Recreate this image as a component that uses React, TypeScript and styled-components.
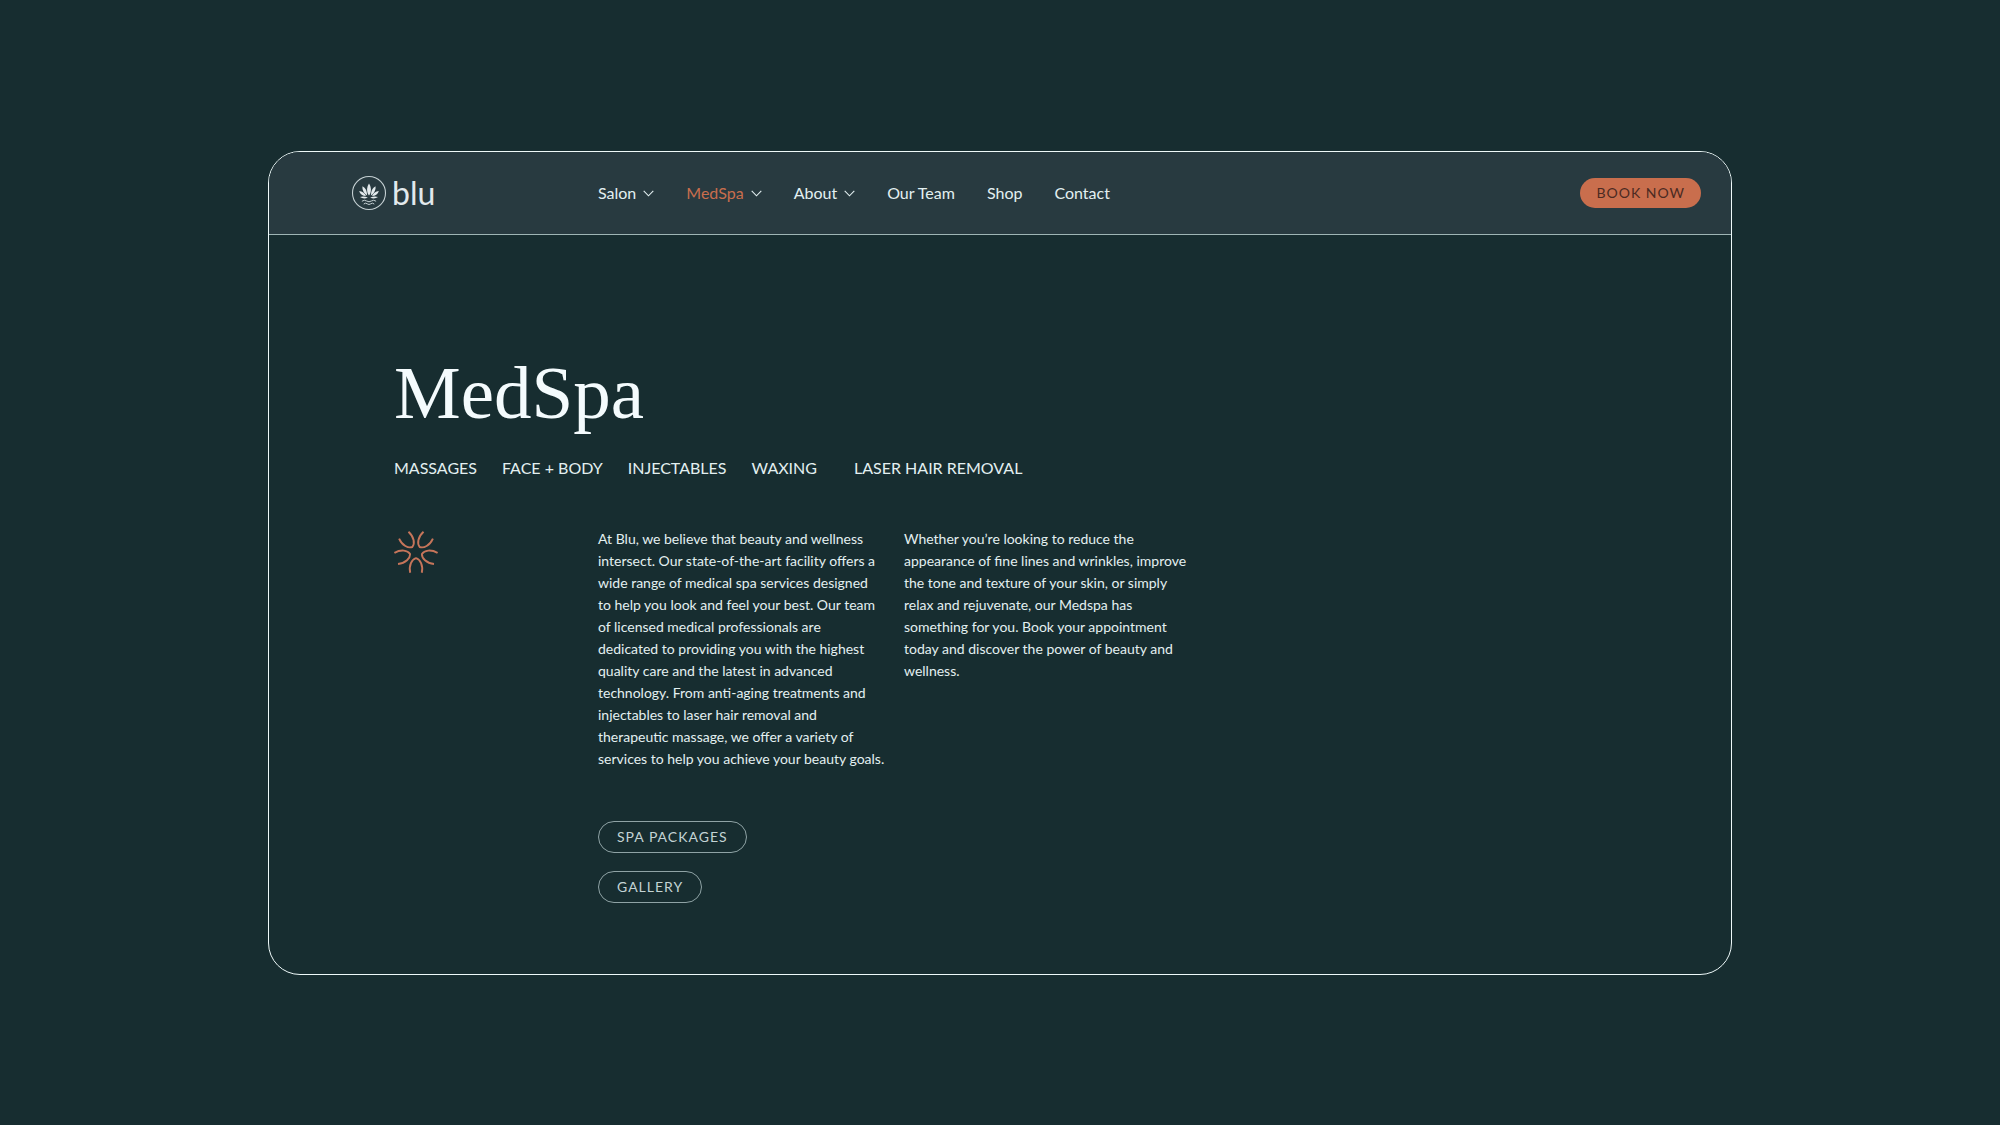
import React from 'react';
import styled, { createGlobalStyle } from 'styled-components';

const color = {
  page: '#172d30',
  header: '#283a40',
  text: '#e3f0f1',
  muted: '#c3d3d4',
  line: '#eef9f9',
  accent: '#c96e4d',
  accentInk: '#4b2a22',
};

const GlobalStyle = createGlobalStyle`
  *, *::before, *::after { box-sizing: border-box; }
  body {
    margin: 0;
    background: ${color.page};
    color: ${color.text};
    font-family: Lato, "Noto Sans", sans-serif;
    font-size: 14px;
    line-height: 22px;
  }
  a { color: inherit; text-decoration: none; }
`;

const Page = styled.div`
  display: flex;
  flex-direction: column;
  justify-content: center;
  min-height: 100vh;
  padding: 41px 268px 40px;

  @media (max-width: 1500px) {
    padding: 40px;
  }
`;

const Window = styled.div`
  border: 1px solid ${color.line};
  border-radius: 32px;
  overflow: hidden;
`;

const Header = styled.header`
  display: grid;
  grid-template-columns: 247px 1fr auto;
  align-items: center;
  padding: 25px 30px 25px 82px;
  background: ${color.header};
  border-bottom: 1px solid #9fb5b5;
`;

const Logo = styled.a`
  display: flex;
  align-items: center;
  gap: 5px;
  height: 32px;
  font-size: 32px;
  line-height: 32px;
  color: #e2e9ec;
`;

const Nav = styled.nav`
  display: flex;
  align-items: center;
  gap: 32px;
`;

const NavLink = styled.a<{ $active?: boolean }>`
  display: flex;
  align-items: center;
  gap: 7px;
  font-size: 16px;
  line-height: 24px;
  white-space: nowrap;
  color: ${(p) => (p.$active ? color.accent : color.text)};

  svg { color: ${color.text}; }
`;

const Button = styled.button<{ $filled?: boolean }>`
  height: ${(p) => (p.$filled ? 30 : 32)}px;
  padding: 0 ${(p) => (p.$filled ? 16 : 18)}px;
  border: ${(p) => (p.$filled ? '0' : '1px solid #8fa3a5')};
  border-radius: 16px;
  background: ${(p) => (p.$filled ? color.accent : 'transparent')};
  color: ${(p) => (p.$filled ? color.accentInk : color.muted)};
  font-family: inherit;
  font-size: 14px;
  line-height: 22px;
  letter-spacing: 1px;
  white-space: nowrap;
  cursor: pointer;
`;

const Content = styled.main`
  padding: 114px 125px 71px;
`;

const Title = styled.h1`
  margin: 0;
  font-family: "Liberation Serif", serif;
  font-size: 75px;
  font-weight: 400;
  line-height: 88px;
  color: #f4fbfd;
`;

const Tabs = styled.nav`
  display: flex;
  flex-wrap: wrap;
  gap: 25px;
  margin-top: 19px;
  font-size: 16px;
  line-height: 24px;

  a:last-child { margin-left: 12px; }
`;

const Intro = styled.section`
  display: grid;
  grid-template-columns: 204px 306px 306px;
  margin-top: 48px;

  > svg { margin-top: 3px; }
`;

const Copy = styled.p`
  margin: 0;
  white-space: nowrap;
`;

const Actions = styled.div`
  display: flex;
  flex-direction: column;
  align-items: flex-start;
  gap: 18px;
  margin-top: 51px;
  padding-left: 204px;
`;

const Lotus = () => (
  <svg width="36" height="36" viewBox="-18 -18 36 36" fill="none" aria-hidden="true">
    <circle r="16.5" stroke="#c5d0d3" strokeWidth="1.1" />
    <g fill="#e2e9ec">
      <path d="M0 2.6C-2.6-.8-2.5-5.8 0-9.6C2.5-5.8 2.6-.8 0 2.6Z" />
      {[1, -1].map((s) => (
        <g key={s} transform={`scale(${s} 1)`}>
          <path d="M1.9 2.4C1.9-2 3.4-5.2 6.5-6.8C7-3 5 .6 1.9 2.4Z" />
          <path d="M3 3.1C4.4 .2 6.6-1.7 9.9-2C8.7 1.2 6.3 3 3 3.1Z" />
          <path d="M1.2 4.5C4 3.5 6.4 3.2 9 4.1C6.6 5.8 3.6 5.9 1.2 4.5Z" />
        </g>
      ))}
    </g>
    <g stroke="#c5d0d3" strokeWidth="1" strokeLinecap="round">
      <path d="M-6.8 8Q-4.6 6.4-2.3 8T2.3 8T6.8 8" />
      <path d="M-5 10.8Q-3.6 9.4-1.8 10.8T1.8 10.8T5 10.8" />
    </g>
  </svg>
);

const Chevron = () => (
  <svg width="11" height="7" viewBox="0 0 11 7" fill="none" aria-hidden="true">
    <path d="M.7.9L5.5 5.8L10.3.9" stroke="currentColor" strokeWidth="1.1" />
  </svg>
);

const Burst = () => (
  <svg width="44" height="44" viewBox="-22 -21 44 44" fill="none" aria-hidden="true">
    {[0, 72, 144, 216, 288].map((angle) => (
      <path
        key={angle}
        transform={`rotate(${angle})`}
        d="M-5.8 20.8C-7.4 13.2-4.2 7.4 0 6.2C4.2 7.4 7.4 13.2 5.8 20.8"
        stroke="#c6755a"
        strokeWidth="1.9"
        strokeLinejoin="round"
      />
    ))}
  </svg>
);

const navItems = [
  { label: 'Salon', menu: true },
  { label: 'MedSpa', menu: true, active: true },
  { label: 'About', menu: true },
  { label: 'Our Team' },
  { label: 'Shop' },
  { label: 'Contact' },
];

const tabs = ['MASSAGES', 'FACE + BODY', 'INJECTABLES', 'WAXING', 'LASER HAIR REMOVAL'];

const paragraphs = [
  [
    'At Blu, we believe that beauty and wellness',
    'intersect. Our state-of-the-art facility offers a',
    'wide range of medical spa services designed',
    'to help you look and feel your best. Our team',
    'of licensed medical professionals are',
    'dedicated to providing you with the highest',
    'quality care and the latest in advanced',
    'technology. From anti-aging treatments and',
    'injectables to laser hair removal and',
    'therapeutic massage, we offer a variety of',
    'services to help you achieve your beauty goals.',
  ],
  [
    'Whether you’re looking to reduce the',
    'appearance of fine lines and wrinkles, improve',
    'the tone and texture of your skin, or simply',
    'relax and rejuvenate, our Medspa has',
    'something for you. Book your appointment',
    'today and discover the power of beauty and',
    'wellness.',
  ],
];

export default function App() {
  return (
    <>
      <GlobalStyle />
      <Page>
        <Window>
          <Header>
            <Logo href="#">
              <Lotus />
              blu
            </Logo>
            <Nav aria-label="Main">
              {navItems.map((item) => (
                <NavLink key={item.label} href="#" $active={item.active}>
                  {item.label}
                  {item.menu && <Chevron />}
                </NavLink>
              ))}
            </Nav>
            <Button $filled type="button">BOOK NOW</Button>
          </Header>
          <Content>
            <Title>MedSpa</Title>
            <Tabs aria-label="MedSpa services">
              {tabs.map((tab) => (
                <a key={tab} href="#">{tab}</a>
              ))}
            </Tabs>
            <Intro>
              <Burst />
              {paragraphs.map((lines) => (
                <Copy key={lines[0]}>
                  {lines.map((line, i) => (
                    <React.Fragment key={line}>
                      {i > 0 && <br />}
                      {line}
                    </React.Fragment>
                  ))}
                </Copy>
              ))}
            </Intro>
            <Actions>
              <Button type="button">SPA PACKAGES</Button>
              <Button type="button">GALLERY</Button>
            </Actions>
          </Content>
        </Window>
      </Page>
    </>
  );
}
